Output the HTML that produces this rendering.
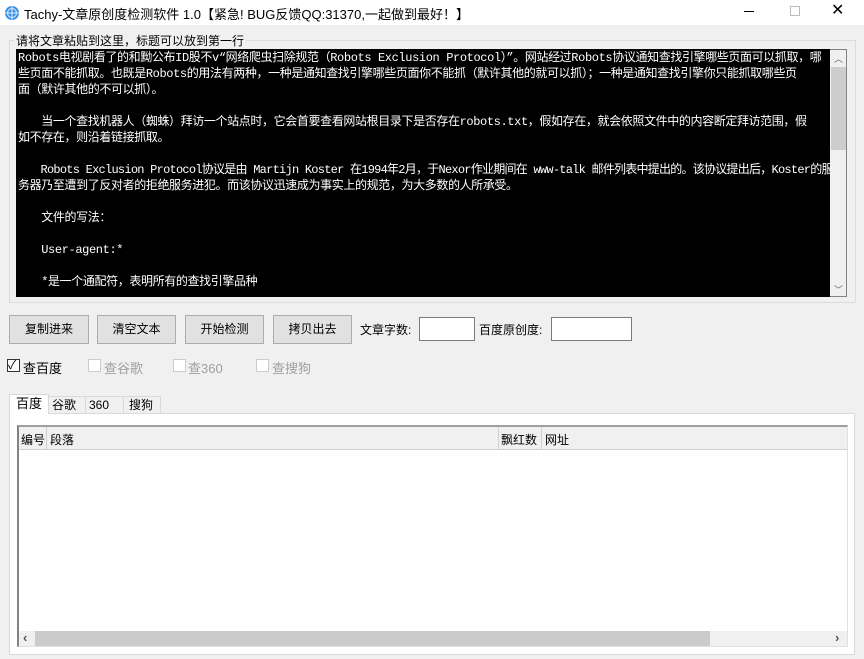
<!DOCTYPE html>
<html><head><meta charset="utf-8"><style>
*{margin:0;padding:0;box-sizing:border-box}
body{width:864px;height:659px;background:#f0f0f0;font-family:"Liberation Sans","Noto Sans CJK SC",sans-serif;font-size:12px;color:#000;position:relative;overflow:hidden}
.a{position:absolute;white-space:nowrap}
.title{left:0;top:0;width:864px;height:25px;background:#fff}
.btn{position:absolute;top:315px;height:29px;background:#e1e1e1;border:1px solid #adadad;text-align:center;line-height:27px;font-size:12px}
.inp{position:absolute;top:317px;height:24px;background:#fff;border:1px solid #7a7a7a}
.txt{left:16px;top:49px;width:815px;height:248px;background:#000;color:#fff;font-family:"Liberation Mono","Noto Sans CJK SC",monospace;font-size:12px;line-height:16px;padding:1px 2px;overflow:hidden;letter-spacing:-0.38px}
.txt p{white-space:nowrap;height:16px}
.cb{position:absolute;top:359px;width:13px;height:13px;border:1px solid #ccc;background:#fff}
.gray{color:#a0a0a0}
.tab{position:absolute;top:396px;height:18px;border:1px solid #d9d9d9;border-bottom:none;line-height:17px;padding-left:3px}
</style></head><body>
<div class="a title"></div>
<svg class="a" style="left:4px;top:5px" width="16" height="16" viewBox="0 0 16 16"><circle cx="8" cy="8" r="7" fill="#3a8ee6"/><circle cx="8" cy="8" r="4.5" fill="none" stroke="#bfe0ff" stroke-width="1.2"/><path d="M1 8H15M8 1V15" stroke="#dff0ff" stroke-width="1"/></svg>
<div class="a" style="left:24px;top:4px;font-size:13px">Tachy-文章原创度检测软件 1.0【紧急! BUG反馈QQ:31370,一起做到最好！】</div>
<div class="a" style="left:744px;top:11px;width:10px;height:1px;background:#000"></div>
<div class="a" style="left:790px;top:6px;width:10px;height:10px;border:1px solid #bbb"></div>
<div class="a" style="left:831px;top:3px;font-size:16px;line-height:16px">✕</div>

<div class="a" style="left:9px;top:40px;width:847px;height:263px;border:1px solid #dcdcdc"></div>
<div class="a" style="left:14px;top:32px;background:#f0f0f0;padding:0 2px;font-size:12px">请将文章粘贴到这里，标题可以放到第一行</div>
<div class="a txt">
<p>Robots电视剧看了的和黝公布ID股不v“网络爬虫扫除规范（Robots Exclusion Protocol）”。网站经过Robots协议通知查找引擎哪些页面可以抓取，哪</p>
<p>些页面不能抓取。也既是Robots的用法有两种，一种是通知查找引擎哪些页面你不能抓（默许其他的就可以抓）；一种是通知查找引擎你只能抓取哪些页</p>
<p>面（默许其他的不可以抓）。</p><p></p>
<p>　　当一个查找机器人（蜘蛛）拜访一个站点时，它会首要查看网站根目录下是否存在robots.txt，假如存在，就会依照文件中的内容断定拜访范围，假</p>
<p>如不存在，则沿着链接抓取。</p><p></p>
<p style="letter-spacing:-0.75px">　　Robots Exclusion Protocol协议是由 Martijn Koster 在1994年2月，于Nexor作业期间在 www-talk 邮件列表中提出的。该协议提出后，Koster的服</p>
<p>务器乃至遭到了反对者的拒绝服务进犯。而该协议迅速成为事实上的规范，为大多数的人所承受。</p><p></p>
<p>　　文件的写法：</p><p></p>
<p>　　User-agent:*</p><p></p>
<p>　　*是一个通配符，表明所有的查找引擎品种</p>
</div>
<div class="a" style="left:830px;top:49px;width:17px;height:248px;background:#f0f0f0;border:1px solid #828282;border-left:none"></div>
<div class="a" style="left:831px;top:67px;width:15px;height:83px;background:#cdcdcd"></div>
<div class="a" style="left:834px;top:52px;font-size:9px;color:#606060">︿</div>
<div class="a" style="left:834px;top:283px;font-size:9px;color:#606060">﹀</div>

<div class="btn" style="left:9px;width:80px">复制进来</div>
<div class="btn" style="left:97px;width:79px">清空文本</div>
<div class="btn" style="left:185px;width:79px">开始检测</div>
<div class="btn" style="left:273px;width:79px">拷贝出去</div>
<div class="a" style="left:360px;top:321px">文章字数:</div>
<div class="inp" style="left:419px;width:56px"></div>
<div class="a" style="left:479px;top:321px">百度原创度:</div>
<div class="inp" style="left:551px;width:81px"></div>

<div class="cb" style="left:7px;border-color:#333"></div>
<div class="a" style="left:8px;top:356px;font-size:12px">✓</div>
<div class="a" style="left:23px;top:358px;font-size:13px">查百度</div>
<div class="cb" style="left:88px"></div><div class="a gray" style="left:104px;top:358px;font-size:13px">查谷歌</div>
<div class="cb" style="left:173px"></div><div class="a gray" style="left:188px;top:358px;font-size:13px">查360</div>
<div class="cb" style="left:256px"></div><div class="a gray" style="left:272px;top:358px;font-size:13px">查搜狗</div>

<div class="a" style="left:9px;top:413px;width:846px;height:242px;background:#fff;border:1px solid #d9d9d9"></div>
<div class="tab" style="left:48px;width:38px">谷歌</div>
<div class="tab" style="left:85px;width:39px">360</div>
<div class="tab" style="left:123px;width:38px;padding-left:5px">搜狗</div>
<div class="a" style="left:9px;top:394px;width:40px;height:20px;background:#fff;border:1px solid #d9d9d9;border-bottom:none;padding-left:6px;line-height:18px;font-size:13px">百度</div>

<div class="a" style="left:17px;top:425px;width:831px;height:222px;border:1px solid #828282;border-right:1px solid #e0e0e0;border-bottom:1px solid #e0e0e0;border-left:2px solid #828282;border-top:2px solid #a0a0a0"></div>
<div class="a" style="left:19px;top:427px;width:828px;height:23px;background:#f0f0f0;border-bottom:1px solid #d0d0d0"></div>
<div class="a" style="left:21px;top:431px">编号</div>
<div class="a" style="left:46px;top:427px;width:1px;height:23px;background:#d0d0d0"></div>
<div class="a" style="left:50px;top:431px">段落</div>
<div class="a" style="left:498px;top:427px;width:1px;height:23px;background:#d0d0d0"></div>
<div class="a" style="left:501px;top:431px">飘红数</div>
<div class="a" style="left:541px;top:427px;width:1px;height:23px;background:#d0d0d0"></div>
<div class="a" style="left:545px;top:431px">网址</div>
<div class="a" style="left:19px;top:631px;width:828px;height:15px;background:#f0f0f0"></div>
<div class="a" style="left:35px;top:631px;width:675px;height:15px;background:#cbcbcb"></div>
<div class="a" style="left:23px;top:630px;font-size:13px;font-weight:bold;color:#555">‹</div>
<div class="a" style="left:835px;top:630px;font-size:13px;font-weight:bold;color:#555">›</div>
</body></html>
